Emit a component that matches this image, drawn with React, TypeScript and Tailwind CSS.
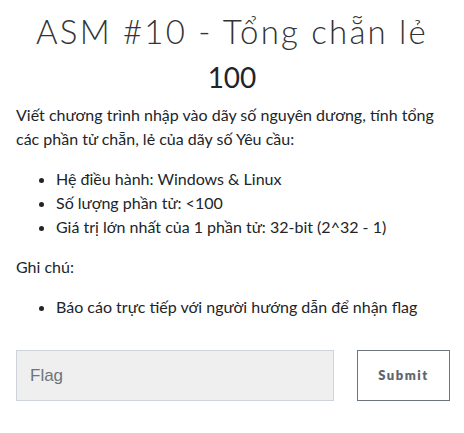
import React from "react";

const App = () => {
  return (
    <div className="w-[464px] h-[433px] overflow-hidden bg-white px-4 text-[#212529] font-['Lato',sans-serif]">
      <h3 className="pt-[12px] text-center text-[33px] leading-[1.2] font-light tracking-[2.2px] whitespace-nowrap text-[#333]">
        ASM #10 - Tổng chẵn lẻ
      </h3>
      <h4 className="mt-[9px] text-center text-[28px] leading-[1.2] font-normal">100</h4>

      <div className="mt-[9px] text-base leading-6">
        <p className="mb-4">
          Viết chương trình nhập vào dãy số nguyên dương, tính tổng các phần tử chẵn, lẻ của dãy số Yêu cầu:
        </p>
        <ul className="mb-4 list-disc pl-10">
          <li>Hệ điều hành: Windows &amp; Linux</li>
          <li>Số lượng phần tử: &lt;100</li>
          <li>Giá trị lớn nhất của 1 phần tử: 32-bit (2^32 - 1)</li>
        </ul>
        <p className="mb-4">Ghi chú:</p>
        <ul className="list-disc pl-10">
          <li>Báo cáo trực tiếp với người hướng dẫn để nhận flag</li>
        </ul>
      </div>

      <form className="mt-[31px] flex items-start gap-[23px]">
        <input
          type="text"
          name="answer"
          placeholder="Flag"
          className="h-[51px] w-[318px] shrink-0 border border-[#ced4da] bg-[#efefef] px-[13px] text-[17px] font-['Liberation_Sans',sans-serif] placeholder-[#6c757d] outline-none"
        />
        <button
          type="button"
          className="h-[51px] w-[93px] shrink-0 border border-[#6c757d] bg-white text-[13px] font-extrabold tracking-[1.5px] text-[#5f666d]"
        >
          Submit
        </button>
      </form>
    </div>
  );
};

export default App;
